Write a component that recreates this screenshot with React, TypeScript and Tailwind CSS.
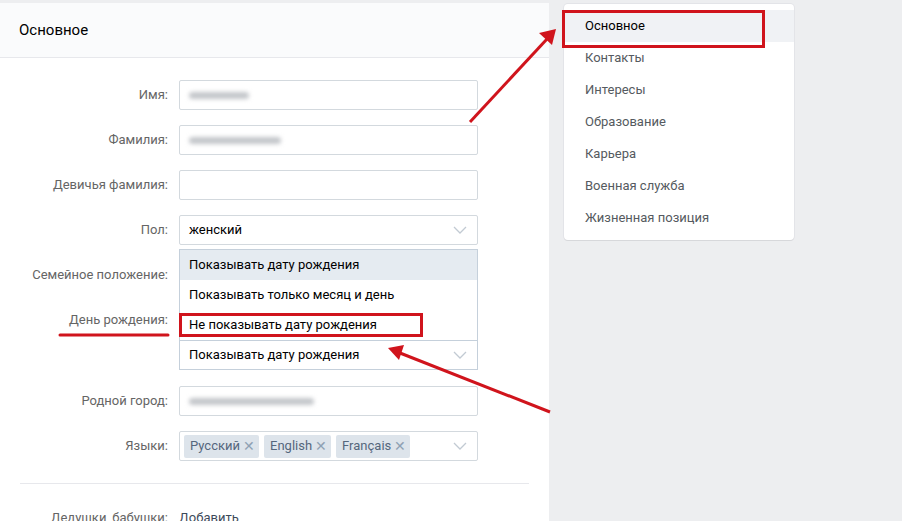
import React from 'react';

const Chevron = () => (
  <svg width="14" height="8" viewBox="0 0 14 8" className="absolute right-[10px] top-1/2 -translate-y-1/2">
    <path d="M1 1l6 6 6-6" fill="none" stroke="#c2cad3" strokeWidth="1.3" />
  </svg>
);

const Row: React.FC<{ label: string; className?: string; children: React.ReactNode }> = ({ label, className, children }) => (
  <div className={`flex items-center ${className ?? ''}`}>
    <div className="w-[169px] pr-[1px] text-right text-[13px] text-[#656565]">{label}</div>
    <div className="ml-[10px] w-[299px]">{children}</div>
  </div>
);

const Input: React.FC<{ children?: React.ReactNode; select?: boolean }> = ({ children, select }) => (
  <div className="relative h-[30px] rounded-[2px] border border-[#d3d9de] bg-white pl-[9px] flex items-center text-[13px] text-black">
    {children}
    {select && <Chevron />}
  </div>
);

const Blur: React.FC<{ w: string }> = ({ w }) => (
  <div className={`h-[7px] ${w} rounded-full bg-[#c3c6ca] blur-[2px]`} />
);

const Chip: React.FC<{ text: string }> = ({ text }) => (
  <div className="flex h-[23px] items-center gap-[3px] rounded-[2px] bg-[#dde4eb] pl-[6px] pr-[4px] text-[13px] text-[#55677d]">
    {text}
    <span className="text-[14px] leading-none text-[#8fa1b4]">✕</span>
  </div>
);

const menu = ['Основное', 'Контакты', 'Интересы', 'Образование', 'Карьера', 'Военная служба', 'Жизненная позиция'];

export default function App() {
  return (
    <div className="relative h-[521px] w-[902px] overflow-hidden bg-[#edeef0] font-['Roboto',sans-serif]">
      <div className="flex pt-[3px]">
        {/* main panel */}
        <div className="w-[549px] h-[560px] bg-white">
          <div className="h-[55px] border-b border-[#e7e8ec] bg-[#fafbfc] pl-[19px] pt-[16px] text-[15px] text-black">
            Основное
          </div>
          <div className="pt-[22px]">
            <Row label="Имя:">
              <Input><Blur w="w-[60px]" /></Input>
            </Row>
            <Row label="Фамилия:" className="mt-[15px]">
              <Input><Blur w="w-[92px]" /></Input>
            </Row>
            <Row label="Девичья фамилия:" className="mt-[15px]">
              <Input />
            </Row>
            <Row label="Пол:" className="mt-[15px]">
              <Input select>женский</Input>
            </Row>
            <Row label="Семейное положение:" className="mt-[15px]">
              <Input select />
            </Row>
            <Row label="День рождения:" className="mt-[15px]">
              <Input select />
            </Row>
            <div className="ml-[179px] mt-[5px] w-[299px]">
              <div className="relative">
                <div className="absolute bottom-full left-0 w-full border border-b-0 border-[#c5d0db] bg-white text-[13px] text-black">
                  <div className="flex h-[30px] items-center bg-[#e5ebf1] pl-[9px]">Показывать дату рождения</div>
                  <div className="flex h-[30px] items-center pl-[9px]">Показывать только месяц и день</div>
                  <div className="flex h-[30px] items-center pl-[9px]">Не показывать дату рождения</div>
                  <div className="absolute left-[-1px] top-[63px] h-[24px] w-[244px] border-[3px] border-[#d0141c]" />
                </div>
                <div className="relative h-[30px] border border-[#c5d0db] bg-white pl-[9px] flex items-center text-[13px] text-black">
                  Показывать дату рождения
                  <Chevron />
                </div>
              </div>
            </div>
            <Row label="Родной город:" className="mt-[16px]">
              <Input><Blur w="w-[125px]" /></Input>
            </Row>
            <Row label="Языки:" className="mt-[15px]">
              <div className="relative flex h-[30px] items-center gap-[5px] rounded-[2px] border border-[#d3d9de] bg-white pl-[4px]">
                <Chip text="Русский" />
                <Chip text="English" />
                <Chip text="Français" />
                <Chevron />
              </div>
            </Row>
            <div className="mx-[20px] mt-[22px] border-t border-[#e7e8ec]" />
            <Row label="Дедушки, бабушки:" className="mt-[24px]">
              <div className="text-[13px] text-[#3d4a5a]">Добавить</div>
            </Row>
          </div>
        </div>

        {/* right menu */}
        <div className="relative ml-[15px] mt-[1px] h-[236px] w-[230px] rounded-[4px] bg-white py-[6px] shadow-[0_1px_0_0_#d7d8db,0_0_0_1px_#e3e4e8]">
          {menu.map((item, i) => (
            <div
              key={item}
              className={`flex h-[32px] items-center pl-[21px] text-[13px] ${i === 0 ? 'bg-[#f0f2f5] text-black' : 'text-[#555a60]'}`}
            >
              {item}
            </div>
          ))}
          <div className="absolute left-[-2px] top-[6px] h-[38px] w-[203px] border-[3px] border-[#d0141c]" />
        </div>
      </div>

      {/* annotations */}
      <svg className="pointer-events-none absolute inset-0" width="902" height="521">
        <line x1="60" y1="335" x2="168" y2="335" stroke="#d0141c" strokeWidth="3" strokeLinecap="round" />
        <line x1="470" y1="122" x2="547" y2="39" stroke="#d0141c" strokeWidth="3" />
        <polygon points="556,29 552,45 539,33" fill="#d0141c" />
        <line x1="550" y1="412" x2="400" y2="353" stroke="#d0141c" strokeWidth="3" />
        <polygon points="388,348 404,345 399,360" fill="#d0141c" />
      </svg>
    </div>
  );
}
